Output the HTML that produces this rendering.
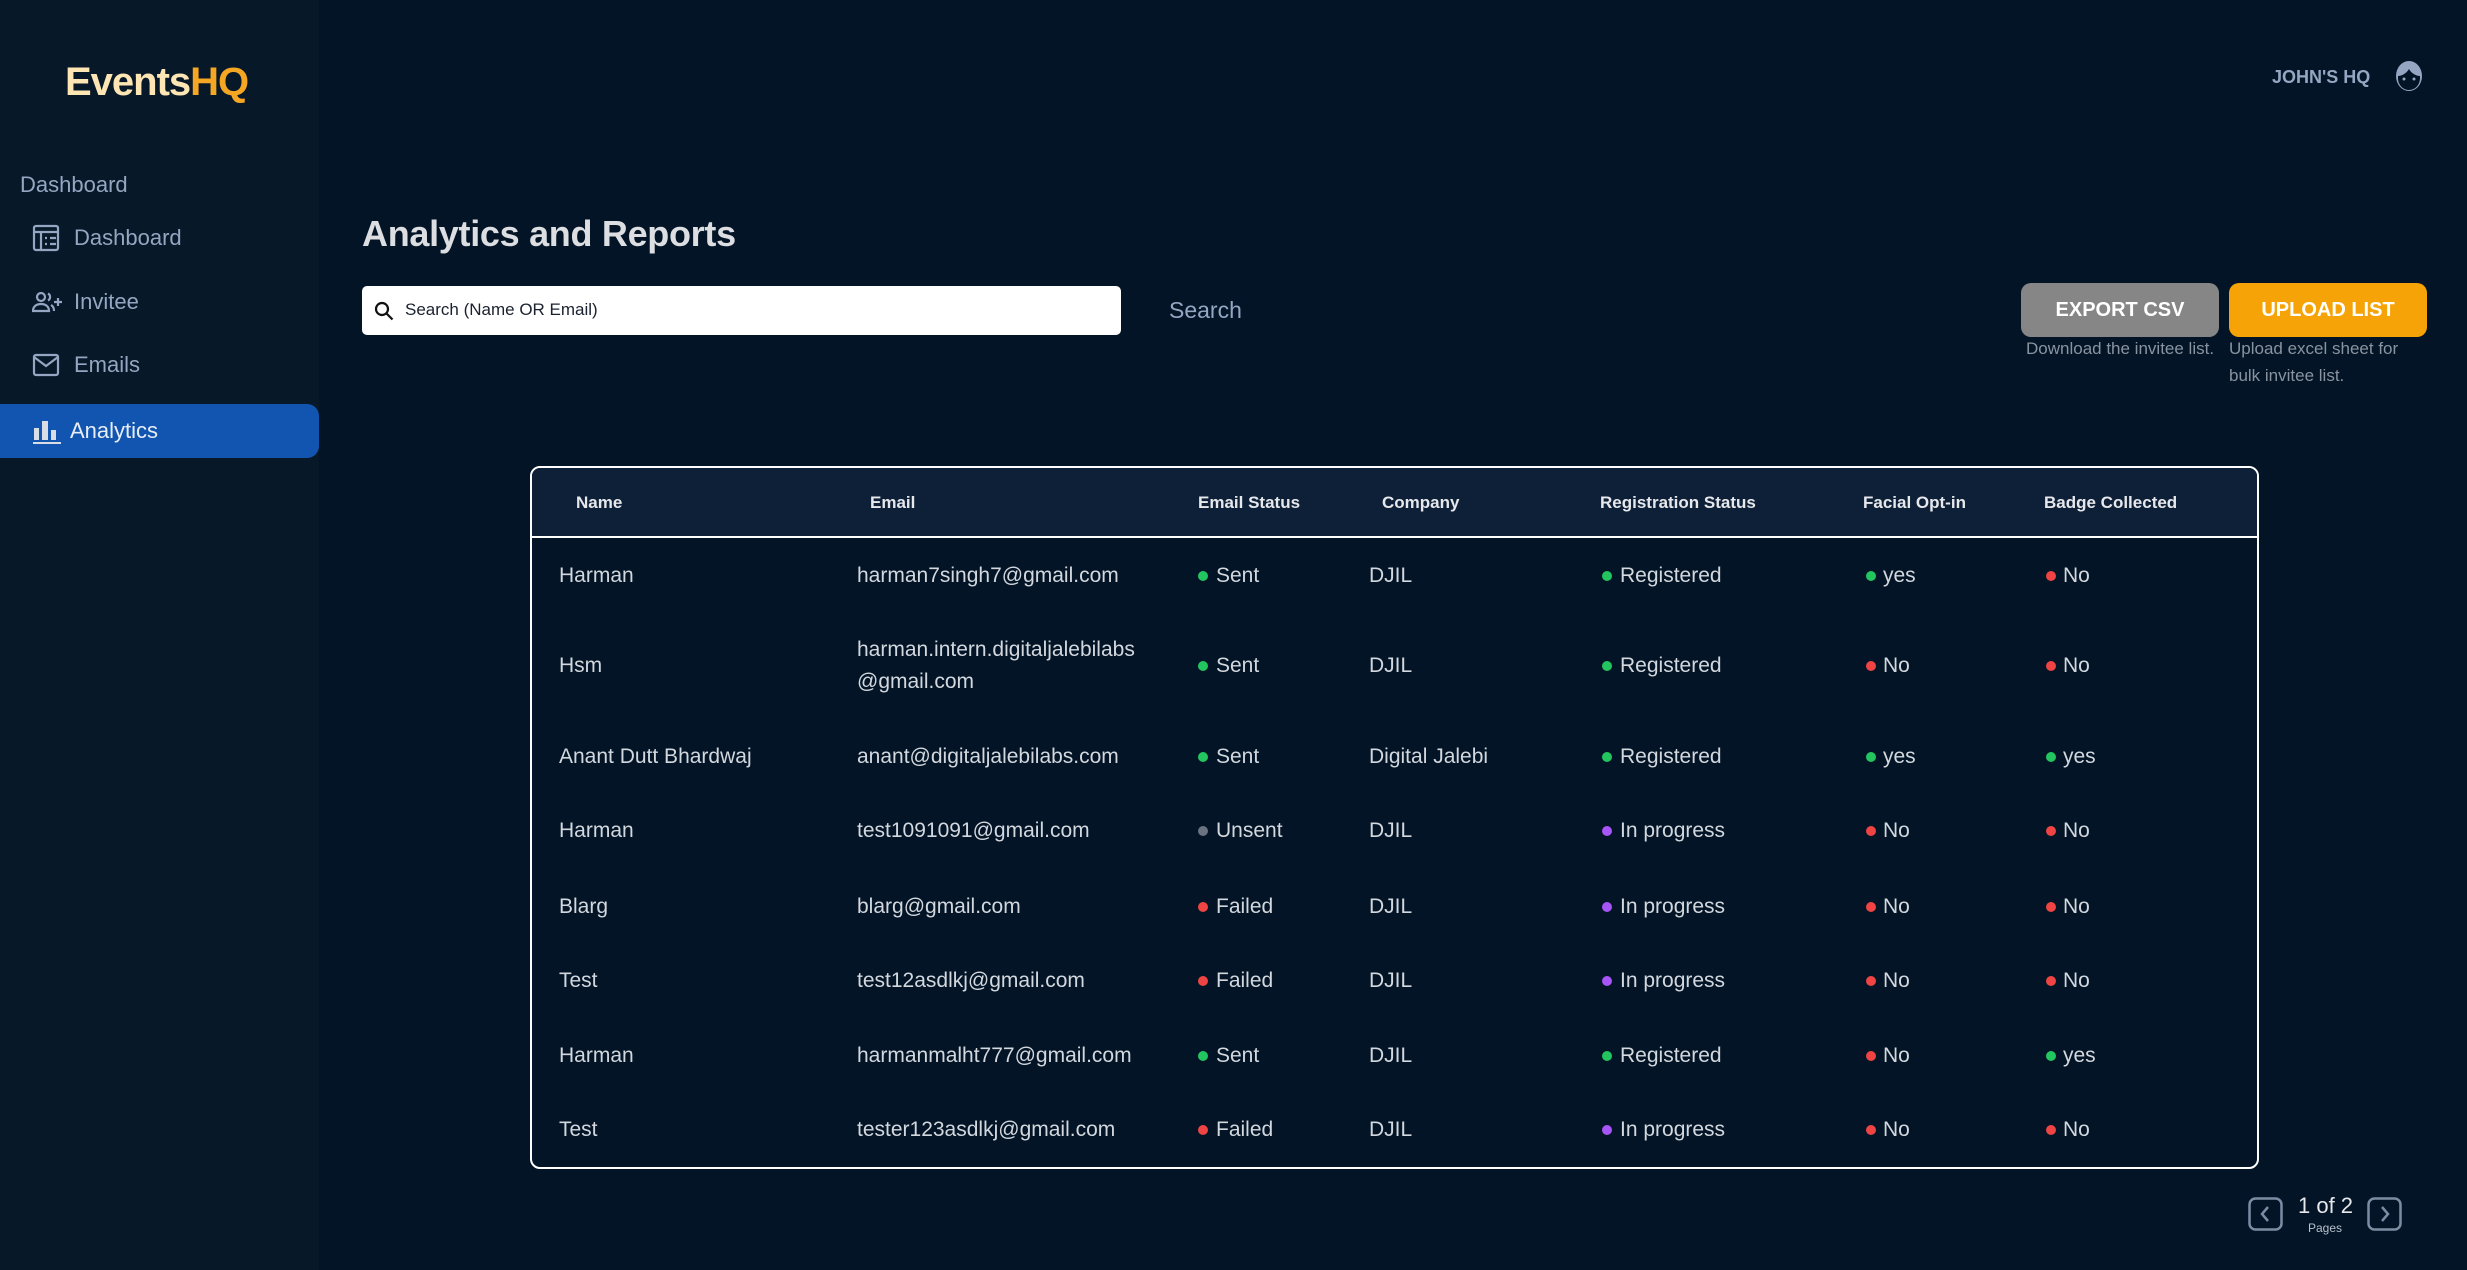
<!DOCTYPE html>
<html><head><meta charset="utf-8">
<style>
*{margin:0;padding:0;box-sizing:border-box}
body{width:2467px;height:1270px;background:#021425;font-family:"Liberation Sans",sans-serif;position:relative;overflow:hidden;color:#d6dae0}
.abs{position:absolute;white-space:nowrap}
#side{position:absolute;left:0;top:0;width:319px;height:1270px;background:#071828}
.nav{position:absolute;left:0;width:319px;height:54px;color:#95a6c2;font-size:22px;display:flex;align-items:center}
.nav svg{position:absolute;left:32px}
.nav span{position:absolute;left:74px}
.btn{position:absolute;height:54px;border-radius:10px;color:#fff;font-weight:bold;font-size:20px;display:flex;align-items:center;justify-content:center}
.cap{position:absolute;font-size:17px;color:#8a93a0;line-height:27px}
#tbl{position:absolute;left:530px;top:466px;width:1729px;height:703px;border:2px solid #fff;border-radius:10px;overflow:hidden}
#th{position:absolute;left:0;top:0;width:100%;height:70px;background:#0e2037;border-bottom:2px solid #fff}
.h{position:absolute;top:35px;font-weight:bold;font-size:17px;color:#e6e8ec;transform:translateY(-50%);white-space:nowrap}
.d{position:absolute;font-size:21px;color:#d3d7de;transform:translateY(-50%);white-space:nowrap;line-height:32px}
.dot{position:absolute;width:10px;height:10px;border-radius:50%;transform:translateY(-50%)}
.g{background:#22c55e}.r{background:#ef4444}.u{background:#6b7280}.p{background:#a855f7}
</style></head><body>
<div id="side">
  <div class="abs" style="left:65px;top:60px;font-size:40px;font-weight:bold;letter-spacing:-1px"><span style="color:#fde6b4">Events</span><span style="color:#f5a623">HQ</span></div>
  <div class="abs" style="left:20px;top:172px;font-size:22px;color:#95a6c2">Dashboard</div>
  <div class="nav" style="top:211px">
    <svg width="28" height="28" viewBox="0 0 28 28" fill="none" stroke="#95a6c2" stroke-width="2.2"><rect x="2" y="2" width="24" height="24" rx="2"/><path d="M2 8h24M9 8v18M13 14h2M18 14h6M13 20h2M18 20h6"/></svg>
    <span>Dashboard</span></div>
  <div class="nav" style="top:275px">
    <svg width="30" height="22" viewBox="0 0 30 22" fill="none" stroke="#95a6c2" stroke-width="2.2"><circle cx="9" cy="6" r="4"/><path d="M1 20c0-5 4-7 8-7s8 2 8 7zM16 2.5a4 4 0 0 1 0 7M19 14c2 1 3 3 3 6M22 11h8M26 7v8"/></svg>
    <span>Invitee</span></div>
  <div class="nav" style="top:338px">
    <svg width="28" height="24" viewBox="0 0 28 24" fill="none" stroke="#95a6c2" stroke-width="2.2"><rect x="2" y="2" width="24" height="20" rx="2"/><path d="M2 4l12 9 12-9"/></svg>
    <span>Emails</span></div>
  <div class="nav" style="top:404px;background:#1155b0;border-radius:0 12px 12px 0;color:#e8eef8">
    <svg width="30" height="26" viewBox="0 0 30 26" fill="#d8dde6"><rect x="2" y="10" width="5" height="12"/><rect x="10" y="3" width="6" height="19"/><rect x="19" y="12" width="5" height="10"/><rect x="1" y="24" width="28" height="2"/></svg>
    <span style="left:70px">Analytics</span></div>
</div>

<div class="abs" style="left:2272px;top:67px;font-size:18px;font-weight:bold;color:#95a6c2">JOHN'S HQ</div>
<svg class="abs" style="left:2394px;top:60px" width="30" height="32" viewBox="0 0 30 32"><ellipse cx="15" cy="16" rx="13" ry="15" fill="#95a6c2"/><path d="M4 16c3 0 8-2 11-7 2 4 7 7 11 7v2c0 7-5 12-11 12S4 25 4 18z" fill="#021425"/><circle cx="10" cy="19" r="1.5" fill="#95a6c2"/><circle cx="20" cy="19" r="1.5" fill="#95a6c2"/></svg>

<div class="abs" style="left:362px;top:213px;font-size:36px;font-weight:bold;color:#dcdee2;letter-spacing:-0.3px">Analytics and Reports</div>

<div class="abs" style="left:362px;top:286px;width:759px;height:49px;background:#fff;border-radius:5px">
  <svg style="position:absolute;left:12px;top:15px" width="20" height="20" viewBox="0 0 20 20" fill="none" stroke="#111" stroke-width="2.2"><circle cx="8" cy="8" r="6"/><path d="M12.5 12.5l6 6"/></svg>
  <div class="abs" style="left:43px;top:14px;font-size:17px;color:#1a2230">Search (Name OR Email)</div>
</div>
<div class="abs" style="left:1169px;top:297px;font-size:23px;color:#95a6c2">Search</div>

<div class="btn" style="left:2021px;top:283px;width:198px;background:#868686">EXPORT CSV</div>
<div class="btn" style="left:2229px;top:283px;width:198px;background:#f5a307">UPLOAD LIST</div>
<div class="cap" style="left:2026px;top:335px">Download the invitee list.</div>
<div class="cap" style="left:2229px;top:335px">Upload excel sheet for<br>bulk invitee list.</div>

<div id="tbl">
  <div id="th">
    <div class="h" style="left:44px">Name</div>
    <div class="h" style="left:338px">Email</div>
    <div class="h" style="left:666px">Email Status</div>
    <div class="h" style="left:850px">Company</div>
    <div class="h" style="left:1068px">Registration Status</div>
    <div class="h" style="left:1331px">Facial Opt-in</div>
    <div class="h" style="left:1512px">Badge Collected</div>
  </div>
  <div id="rows"></div>
</div>

<svg class="abs" style="left:2248px;top:1197px" width="35" height="34" viewBox="0 0 35 34" fill="none" stroke="#7d8ba3" stroke-width="2.5"><rect x="1.5" y="1.5" width="32" height="31" rx="6"/><path d="M20 10l-6 7 6 7"/></svg>
<div class="abs" style="left:2298px;top:1193px;font-size:22px;color:#e6e8ec">1 of 2</div>
<div class="abs" style="left:2308px;top:1221px;font-size:12px;color:#b8c0cc">Pages</div>
<svg class="abs" style="left:2367px;top:1197px" width="35" height="34" viewBox="0 0 35 34" fill="none" stroke="#7d8ba3" stroke-width="2.5"><rect x="1.5" y="1.5" width="32" height="31" rx="6"/><path d="M15 10l6 7-6 7"/></svg>

<script>
var rows=[
[108,"Harman","harman7singh7@gmail.com","g","Sent","DJIL","g","Registered","g","yes","r","No"],
[198,"Hsm","harman.intern.digitaljalebilabs|@gmail.com","g","Sent","DJIL","g","Registered","r","No","r","No"],
[289,"Anant Dutt Bhardwaj","anant@digitaljalebilabs.com","g","Sent","Digital Jalebi","g","Registered","g","yes","g","yes"],
[363,"Harman","test1091091@gmail.com","u","Unsent","DJIL","p","In progress","r","No","r","No"],
[439,"Blarg","blarg@gmail.com","r","Failed","DJIL","p","In progress","r","No","r","No"],
[513,"Test","test12asdlkj@gmail.com","r","Failed","DJIL","p","In progress","r","No","r","No"],
[588,"Harman","harmanmalht777@gmail.com","g","Sent","DJIL","g","Registered","r","No","g","yes"],
[662,"Test","tester123asdlkj@gmail.com","r","Failed","DJIL","p","In progress","r","No","r","No"]];
var h="";
rows.forEach(function(r){var y=r[0];
function t(x,s){return '<div class="d" style="left:'+x+'px;top:'+y+'px">'+s+'</div>';}
function dt(x,c){return '<div class="dot '+c+'" style="left:'+x+'px;top:'+y+'px"></div>';}
h+=t(27,r[1]);
if(r[2].indexOf("|")>=0){var p=r[2].split("|");h+='<div class="d" style="left:325px;top:'+y+'px">'+p[0]+'<br>'+p[1]+'</div>';}else h+=t(325,r[2]);
h+=dt(666,r[3])+t(684,r[4])+t(837,r[5])+dt(1070,r[6])+t(1088,r[7])+dt(1334,r[8])+t(1351,r[9])+dt(1514,r[10])+t(1531,r[11]);
});
document.getElementById("rows").innerHTML=h;
</script>
</body></html>
